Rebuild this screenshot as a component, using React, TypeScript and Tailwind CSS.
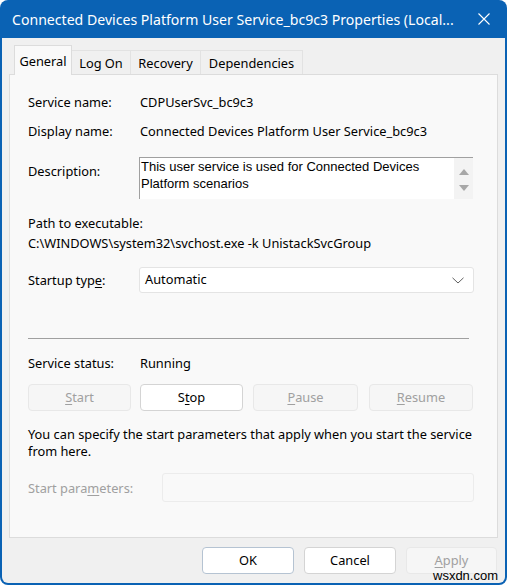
import React from "react";

function U({ children }: { children: React.ReactNode }) {
  return <span className="underline underline-offset-[2px] decoration-[1px]">{children}</span>;
}

function Btn({ children, disabled, w, primary }: { children: React.ReactNode; disabled?: boolean; w?: string; primary?: boolean }) {
  return (
    <div
      className={
        "h-[27px] flex items-center justify-center rounded-[4px] border text-[12.8px] " +
        (disabled
          ? "bg-[#f6f6f6] border-[#e8e8e8] text-[#a0a0a0] "
          : primary
          ? "bg-white border-[#b5c3d2] text-black "
          : "bg-white border-[#d4d4d4] text-black ") +
        (w ?? "")
      }
    >
      {children}
    </div>
  );
}

export default function App() {
  return (
    <div className="relative w-[507px] h-[585px] bg-white font-['Noto_Sans',sans-serif] text-[12.8px] text-black">
      <div className="h-full flex flex-col rounded-[8px] bg-[#0a62b4] px-[2px] pb-[2px] overflow-hidden">
        {/* Title bar */}
        <div className="h-[38px] shrink-0 flex items-center justify-between pl-[10px] pr-[15px] text-white">
          <span className="text-[14.1px] leading-[20px] whitespace-nowrap mt-[1px]">
            Connected Devices Platform User Service_bc9c3 Properties (Local...
          </span>
          <svg width="12" height="12" viewBox="0 0 12 12" className="shrink-0">
            <path d="M0.5 0.5L11.5 11.5M11.5 0.5L0.5 11.5" stroke="white" strokeWidth="1.1" fill="none" />
          </svg>
        </div>

        {/* Body */}
        <div className="flex-1 flex flex-col bg-[#f0f0f0] rounded-b-[6px] px-[7px]">
          {/* Tabs */}
          <div className="h-[36px] shrink-0 flex items-end pl-[5px]">
            <div className="relative z-10 -mb-px w-[58px] h-[30px] flex items-center justify-center bg-[#f9f9f9] border border-b-0 border-[#dcdcdc] leading-[18px]">
              General
            </div>
            <div className="w-[59px] h-[24px] flex items-center justify-center bg-[#f0f0f0] border border-l-0 border-b-0 border-[#e2e2e2] leading-[18px]">
              Log On
            </div>
            <div className="w-[70px] h-[24px] flex items-center justify-center bg-[#f0f0f0] border border-l-0 border-b-0 border-[#e2e2e2] leading-[18px]">
              Recovery
            </div>
            <div className="w-[102px] h-[24px] flex items-center justify-center bg-[#f0f0f0] border border-l-0 border-b-0 border-[#e2e2e2] leading-[18px]">
              Dependencies
            </div>
          </div>

          {/* Panel */}
          <div className="h-[464px] shrink-0 flex flex-col border border-[#dcdcdc] bg-[#f9f9f9] pl-[18px] pr-[23px] pt-[17px]">
            <div className="flex h-[20px] items-center leading-[20px]">
              <div className="w-[112px]">Service name:</div>
              <div>CDPUserSvc_bc9c3</div>
            </div>
            <div className="flex h-[20px] items-center leading-[20px] mt-[9px]">
              <div className="w-[112px]">Display name:</div>
              <div>Connected Devices Platform User Service_bc9c3</div>
            </div>
            <div className="flex mt-[16px]">
              <div className="w-[111px] mt-[4px] leading-[20px]">Description:</div>
              <div className="flex h-[42px] w-[334px] bg-white border-t border-l border-[#a0a0a0]">
                <div className="flex-1 pl-[1px] font-['Liberation_Sans',Arial,sans-serif] text-[13px] leading-[17px] text-black">
                  This user service is used for Connected Devices
                  <br />
                  Platform scenarios
                </div>
                <div className="w-[19px] bg-[#f3f3f3] flex flex-col items-center pt-[11px] gap-[10px]">
                  <svg width="10" height="6" viewBox="0 0 10 6">
                    <path d="M5 0L10 6H0Z" fill="#a7a7a7" />
                  </svg>
                  <svg width="10" height="6" viewBox="0 0 10 6">
                    <path d="M0 0H10L5 6Z" fill="#a7a7a7" />
                  </svg>
                </div>
              </div>
            </div>
            <div className="mt-[14px] leading-[20px]">Path to executable:</div>
            <div className="leading-[20px]">C:\WINDOWS\system32\svchost.exe -k UnistackSvcGroup</div>
            <div className="flex items-center mt-[14px]">
              <div className="w-[111px] leading-[20px]">
                Startup typ<U>e</U>:
              </div>
              <div className="flex-1 h-[26px] flex items-center justify-between bg-white border border-[#e4e4e4] rounded-[3px] pl-[5px] pr-[9px]">
                <span>Automatic</span>
                <svg width="12" height="7" viewBox="0 0 12 7">
                  <path d="M0.5 0.8L6 6L11.5 0.8" stroke="#606060" strokeWidth="1" fill="none" />
                </svg>
              </div>
            </div>
            <div className="mt-[45px] h-px bg-[#a0a0a0] mr-[5px]" />
            <div className="flex h-[20px] items-center leading-[20px] mt-[14px]">
              <div className="w-[112px]">Service status:</div>
              <div>Running</div>
            </div>
            <div className="flex mt-[11px]">
              <Btn disabled w="w-[103px]">
                <U>S</U>tart
              </Btn>
              <div className="w-[9px]" />
              <Btn w="w-[103px]">
                S<U>t</U>op
              </Btn>
              <div className="w-[10px]" />
              <Btn disabled w="w-[105px]">
                <U>P</U>ause
              </Btn>
              <div className="w-[11px]" />
              <Btn disabled w="w-[104px]">
                <U>R</U>esume
              </Btn>
            </div>
            <div className="mt-[15px] leading-[17px] whitespace-nowrap">
              You can specify the start parameters that apply when you start the service
              <br />
              from here.
            </div>
            <div className="flex items-center mt-[13px]">
              <div className="w-[134px] text-[#a0a0a0] leading-[20px]">
                Start para<U>m</U>eters:
              </div>
              <div className="flex-1 h-[29px] bg-[#f9f9f9] border border-[#ececec] rounded-[3px]" />
            </div>
          </div>

          {/* Bottom buttons */}
          <div className="flex justify-end gap-[10px] mt-[9px] pr-[1px]">
            <Btn primary w="w-[92px]">OK</Btn>
            <Btn w="w-[92px]">Cancel</Btn>
            <Btn disabled w="w-[91px]">
              <U>A</U>pply
            </Btn>
          </div>
        </div>
      </div>
      <div className="absolute left-[433px] top-[567px] text-[13px] leading-[18px] text-black font-['Liberation_Sans',Arial,sans-serif]">
        wsxdn.com
      </div>
    </div>
  );
}
